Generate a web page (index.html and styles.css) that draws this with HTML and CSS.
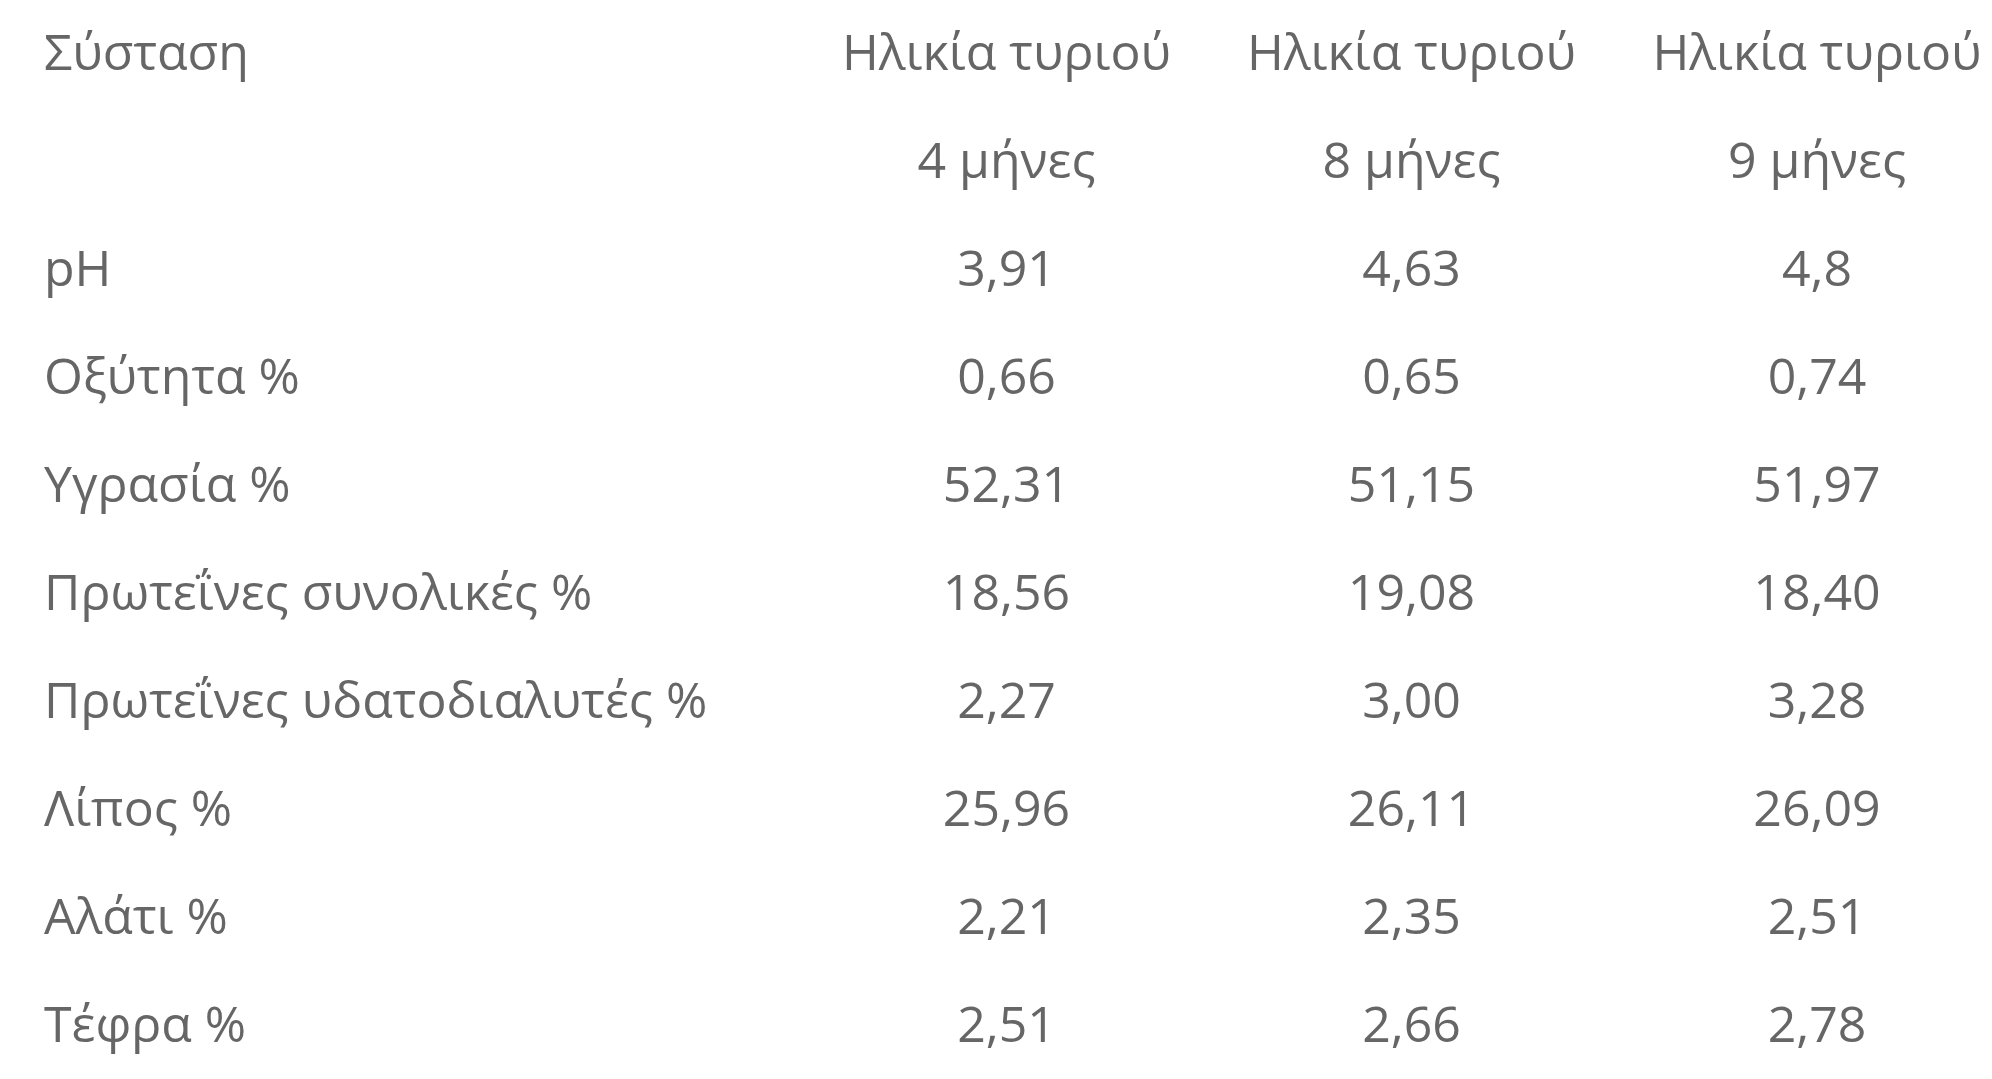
FILE: index.html
```html
<!DOCTYPE html>
<html lang="el">
<head>
<meta charset="utf-8">
<title>Σύσταση</title>
<link rel="stylesheet" href="styles.css">
</head>
<body>
<div class="table">
  <div class="row">
    <div class="cell label">Σύσταση</div>
    <div class="cell">Ηλικία τυριού</div>
    <div class="cell">Ηλικία τυριού</div>
    <div class="cell last">Ηλικία τυριού</div>
  </div>
  <div class="row">
    <div class="cell label"></div>
    <div class="cell">4 μήνες</div>
    <div class="cell">8 μήνες</div>
    <div class="cell last">9 μήνες</div>
  </div>
  <div class="row">
    <div class="cell label">pH</div>
    <div class="cell">3,91</div>
    <div class="cell">4,63</div>
    <div class="cell last">4,8</div>
  </div>
  <div class="row">
    <div class="cell label">Οξύτητα %</div>
    <div class="cell">0,66</div>
    <div class="cell">0,65</div>
    <div class="cell last">0,74</div>
  </div>
  <div class="row">
    <div class="cell label">Υγρασία %</div>
    <div class="cell">52,31</div>
    <div class="cell">51,15</div>
    <div class="cell last">51,97</div>
  </div>
  <div class="row">
    <div class="cell label">Πρωτεΐνες συνολικές %</div>
    <div class="cell">18,56</div>
    <div class="cell">19,08</div>
    <div class="cell last">18,40</div>
  </div>
  <div class="row">
    <div class="cell label">Πρωτεΐνες υδατοδιαλυτές %</div>
    <div class="cell">2,27</div>
    <div class="cell">3,00</div>
    <div class="cell last">3,28</div>
  </div>
  <div class="row">
    <div class="cell label">Λίπος %</div>
    <div class="cell">25,96</div>
    <div class="cell">26,11</div>
    <div class="cell last">26,09</div>
  </div>
  <div class="row">
    <div class="cell label">Αλάτι %</div>
    <div class="cell">2,21</div>
    <div class="cell">2,35</div>
    <div class="cell last">2,51</div>
  </div>
  <div class="row">
    <div class="cell label">Τέφρα %</div>
    <div class="cell">2,51</div>
    <div class="cell">2,66</div>
    <div class="cell last">2,78</div>
  </div>
</div>
</body>
</html>
```
FILE: styles.css
```css
html, body {
  margin: 0;
  padding: 0;
  background: #ffffff;
}
body {
  font-family: "Open Sans", "Noto Sans", sans-serif;
  font-size: 50px;
  font-weight: 400;
  color: #666666;
  overflow: hidden;
}
.table {
  display: flex;
  flex-direction: column;
  margin-top: -3px;
}
.row {
  display: grid;
  grid-template-columns: 804px 405px 405px 378px;
  height: 108px;
  align-items: center;
}
.cell {
  text-align: center;
  white-space: nowrap;
  line-height: 1.2;
}
.label {
  text-align: left;
  padding-left: 44px;
}
.last {
  padding-left: 28px;
}
```
